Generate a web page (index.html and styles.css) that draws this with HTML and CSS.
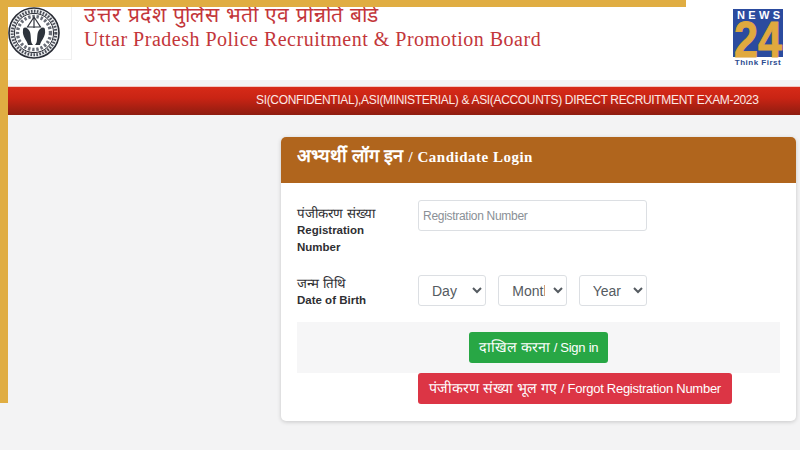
FILE: index.html
```html
<!DOCTYPE html>
<html lang="hi">
<head>
    <meta charset="UTF-8">
    <meta name="viewport" content="width=device-width, initial-scale=1.0">
    <title>Candidate Login</title>
    <link rel="stylesheet" href="styles.css">
</head>
<body>
    <div class="frame-top"></div>
    <div class="frame-left"></div>

    <header class="header">
        <div class="emblem">
            <svg width="52" height="52" viewBox="0 0 52 52">
                <circle cx="26" cy="26" r="25" fill="#eceef0" stroke="#2a2d36" stroke-width="1.6"/>
                <circle cx="26" cy="26" r="21.8" fill="none" stroke="#4a4d57" stroke-width="3" stroke-dasharray="1.6 1.4"/>
                <circle cx="26" cy="26" r="19.6" fill="#fff" stroke="#2a2d36" stroke-width="1"/>
                <circle cx="26" cy="26" r="16.5" fill="none" stroke="#6a6e78" stroke-width="3.4" stroke-dasharray="2.4 1.8"/>
                <path d="M26 10 L19.5 20 H32.5 Z M26 10 V21" fill="none" stroke="#33363f" stroke-width="1.2"/>
                <path d="M15 23 C15 19 20 20 22 25 C23.5 30 22 35 25 38 H20 C19 33 14 30 15 23 Z" fill="#2e343c"/>
                <path d="M37 23 C37 19 32 20 30 25 C28.5 30 30 35 27 38 H32 C33 33 38 30 37 23 Z" fill="#2e343c"/>
            </svg>
        </div>
        <div class="titles">
            <div class="title-hi">उत्तर प्रदेश पुलिस भर्ती एवं प्रोन्नति बोर्ड</div>
            <div class="title-en">Uttar Pradesh Police Recruitment &amp; Promotion Board</div>
        </div>
        <div class="news-logo">
            <svg width="50" height="48" viewBox="0 0 50 48">
                <rect width="50" height="48" fill="#2b4b9f"/>
                <text x="4" y="10" class="news-word" textLength="43">NEWS</text>
                <text x="1" y="47.5" class="news-num" textLength="48" lengthAdjust="spacingAndGlyphs">24</text>
            </svg>
            <div class="news-tag">Think First</div>
        </div>
    </header>

    <div class="exam-bar">SI(CONFIDENTIAL),ASI(MINISTERIAL) &amp; ASI(ACCOUNTS) DIRECT RECRUITMENT EXAM-2023</div>

    <main class="main">
        <div class="card">
            <div class="card-head">
                <span class="head-hi">अभ्यर्थी लॉग इन</span> <span class="head-en">/ Candidate Login</span>
            </div>
            <div class="card-body">
                <div class="form-row reg-row">
                    <label class="field-label" for="reg">
                        <span class="label-hi">पंजीकरण संख्या</span>
                        Registration Number
                    </label>
                    <input type="text" id="reg" class="input-field" placeholder="Registration Number">
                </div>
                <div class="form-row dob-row">
                    <label class="field-label" for="day">
                        <span class="label-hi">जन्म तिथि</span>
                        Date of Birth
                    </label>
                    <div class="dob">
                        <select id="day" class="select-field"><option>Day</option></select>
                        <select class="select-field"><option>Month</option></select>
                        <select class="select-field"><option>Year</option></select>
                    </div>
                </div>
                <div class="submit-band">
                    <button class="button green">दाखिल करना <span class="latin">/ Sign in</span></button>
                </div>
                <div class="forgot">
                    <button class="button red">पंजीकरण संख्या भूल गए <span class="latin">/ Forgot Registration Number</span></button>
                </div>
            </div>
        </div>
    </main>
</body>
</html>
```

FILE: styles.css
```css
* {
    box-sizing: border-box;
}
html, body {
    height: 450px;
}
body {
    margin: 0;
    overflow: hidden;
    background-color: #f3f3f4;
    font-family: "Liberation Sans", Arial, sans-serif;
}
.frame-top {
    position: absolute;
    left: 0;
    top: 0;
    width: 686px;
    height: 7px;
    background-color: #e0ad42;
}
.frame-left {
    position: absolute;
    left: 0;
    top: 0;
    width: 8px;
    height: 403px;
    background-color: #e0ad42;
}
.header {
    display: flex;
    height: 80px;
    padding-left: 8px;
    background-color: #fff;
}
.emblem {
    width: 64px;
    height: 60px;
    padding-top: 7px;
    border-right: 1px solid #f0f0f0;
    border-bottom: 1px solid #f0f0f0;
}
.emblem svg {
    display: block;
}
.titles {
    margin-left: 12px;
    color: #c3363a;
    font-family: "Liberation Serif", serif;
}
.title-hi {
    margin-top: 2px;
    height: 26px;
    font-size: 21px;
    line-height: 26px;
    letter-spacing: 0.65px;
    white-space: nowrap;
}
.title-en {
    margin-top: -1px;
    font-size: 20px;
    line-height: 24px;
    letter-spacing: 0.5px;
    white-space: nowrap;
}
.news-logo {
    margin-left: auto;
    margin-right: 17px;
    padding-top: 9px;
    width: 50px;
}
.news-logo svg {
    display: block;
    overflow: visible;
}
.news-word {
    fill: #fff;
    font-family: "Liberation Sans", sans-serif;
    font-size: 11px;
    font-weight: 700;
}
.news-num {
    fill: #e0a93e;
    stroke: #e0a93e;
    stroke-width: 0.9px;
    font-family: "Liberation Sans", sans-serif;
    font-size: 50px;
    font-weight: 700;
}
.news-tag {
    margin-top: 1px;
    color: #2b4b8f;
    font-size: 8px;
    font-weight: 700;
    line-height: 10px;
    letter-spacing: 0.5px;
    text-align: center;
    white-space: nowrap;
}
.exam-bar {
    height: 29px;
    margin-top: 6px;
    margin-left: 8px;
    padding-left: 248px;
    border-top: 1px solid #f2c6c0;
    background: linear-gradient(#d72a18, #c92414 40%, #8e1c10);
    color: #fbe9e5;
    font-size: 12px;
    line-height: 27px;
    letter-spacing: -0.33px;
    white-space: nowrap;
}
.main {
    padding: 22px 4px 0 281px;
}
.card {
    height: 284px;
    border-radius: 5px;
    background-color: #fff;
    box-shadow: 0 1px 4px rgba(0, 0, 0, 0.18);
}
.card-head {
    height: 46px;
    padding-left: 16px;
    border-radius: 5px 5px 0 0;
    background-color: #b0651d;
    color: #fff;
    line-height: 38px;
    font-weight: 700;
    white-space: nowrap;
}
.head-hi {
    font-size: 18.2px;
}
.head-en {
    margin-left: 1px;
    font-family: "Liberation Serif", serif;
    font-size: 15px;
    letter-spacing: 0.5px;
}
.card-body {
    padding: 17px 16px 0;
}
.form-row {
    display: flex;
}
.reg-row {
    height: 75px;
}
.reg-row .field-label {
    padding-top: 5px;
}
.dob-row {
    height: 47px;
}
.field-label {
    width: 121px;
    padding-right: 30px;
    color: #2f2f33;
    font-size: 11.5px;
    font-weight: 700;
    line-height: 17px;
}
.label-hi {
    display: block;
    font-size: 13.3px;
    font-weight: 400;
    line-height: 17px;
}
.input-field {
    width: 229px;
    height: 31px;
    padding: 6px 4px;
    border: 1px solid #dcdfe3;
    border-radius: 3px;
    font-family: "Liberation Sans", sans-serif;
    font-size: 12px;
    letter-spacing: -0.29px;
}
.input-field::placeholder {
    color: #8a9096;
}
.dob {
    display: flex;
    gap: 12px;
}
.select-field {
    width: 68.33px;
    height: 31px;
    padding: 0 5px 0 9px;
    border: 1px solid #dcdfe3;
    border-radius: 3px;
    background-color: #fff;
    color: #555b61;
    font-family: "Liberation Sans", sans-serif;
    font-size: 14px;
}
.submit-band {
    height: 51px;
    padding-top: 10px;
    background-color: #f6f6f7;
    text-align: center;
}
.forgot {
    padding-left: 121px;
}
.button {
    height: 31px;
    padding: 0 0 3px;
    border: none;
    border-radius: 3px;
    color: #fff;
    font-family: "Liberation Sans", sans-serif;
    font-size: 14.2px;
    white-space: nowrap;
}
.latin {
    font-size: 13px;
    letter-spacing: -0.27px;
}
.green {
    width: 139px;
    background-color: #28a745;
}
.red {
    width: 314px;
    background-color: #dc3545;
}
```
